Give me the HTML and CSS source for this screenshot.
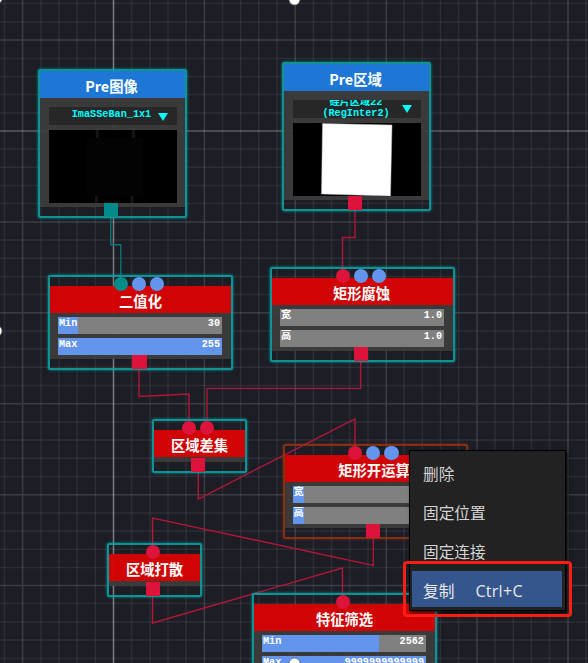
FILE: index.html
```html
<!DOCTYPE html>
<html lang="zh-CN">
<head>
<meta charset="utf-8">
<title>Node Graph</title>
<link rel="stylesheet" href="styles.css">
</head>
<body>
<main class="canvas">
  <svg class="layer" viewBox="0 0 588 663">
    <path class="minor" d="M4.5 0V663M41 0V663M59 0V663M77 0V663M95.4 0V663M131.6 0V663M150 0V663M168 0V663M186 0V663M222.5 0V663M240.6 0V663M258.8 0V663M277 0V663M313.4 0V663M331.5 0V663M349.6 0V663M368 0V663M404 0V663M422.4 0V663M440.5 0V663M458.6 0V663M495 0V663M513.2 0V663M531.4 0V663M549.5 0V663M586 0V663"/>
    <path class="minor" d="M0 3.6H588M0 22H588M0 58.4H588M0 76.5H588M0 94.6H588M0 113H588M0 149H588M0 167.3H588M0 185.5H588M0 203.6H588M0 240H588M0 258.2H588M0 276.4H588M0 294.5H588M0 331H588M0 349H588M0 367.3H588M0 385.5H588M0 422H588M0 440H588M0 458.3H588M0 476.5H588M0 513H588M0 531H588M0 549.3H588M0 567.4H588M0 603.6H588M0 622H588M0 640H588M0 658.4H588"/>
    <path class="major" d="M22.6 0V663M204.4 0V663M295.3 0V663M386.3 0V663M477 0V663M568 0V663M0 40H588M0 222H588M0 312.7H588M0 403.7H588M0 494.7H588M0 585.5H588"/>
    <path class="axis-x" d="M0 131H588"/>
    <path class="axis-y" d="M113.5 0V663"/>
  </svg>
  <svg class="layer" viewBox="0 0 588 663">
    <path class="wire teal" d="M110.7 217V244.7H120.8V284"/>
    <path class="wire" d="M355 210V237.5H342.5V276"/>
    <path class="wire" d="M139 369V396.5L189 394V429"/>
    <path class="wire" d="M360.6 361V388.4H207V429"/>
    <path class="wire" d="M198.3 472V499L355 419V453"/>
    <path class="wire" d="M373.3 538V565.5L152.6 518V552"/>
    <path class="wire" d="M152.6 595V623L342.5 568V602"/>
  </svg>

  <section class="node source n-image">
    <h2 class="title blue">Pre图像</h2>
    <div class="body">
      <div class="select"><span class="value">ImaSSeBan_1x1</span><i class="arrow"></i></div>
      <svg class="preview" viewBox="0 0 128 73">
        <rect width="128" height="73" fill="#000"/>
        <rect x="38" y="8" width="56" height="58" fill="#030303"/>
        <path d="M48.300 0V8M84.500 0V8M47.500 66V73M83 66V73" stroke="#141414" stroke-width="3"/>
      </svg>
    </div>
    <i class="out green"></i>
  </section>

  <section class="node source n-region">
    <h2 class="title blue">Pre区域</h2>
    <div class="body">
      <div class="select"><span class="value two">硅片区域22<br>(RegInter2)</span><i class="arrow"></i></div>
      <svg class="preview" viewBox="0 0 128 73">
        <rect width="128" height="73" fill="#000"/>
        <path d="M29.500 0.500L99 2L97.500 73L28.500 71Z" fill="#fff" stroke="#bbb" stroke-width="0.500"/>
      </svg>
    </div>
    <i class="out"></i>
  </section>

  <section class="node op n-binary">
    <div class="ins"><i class="green"></i><i class="param"></i><i class="param"></i></div>
    <h2 class="title">二值化</h2>
    <div class="body">
      <div class="slider"><i class="fill" style="width:12%"></i><span>Min</span><b>30</b></div>
      <div class="slider"><i class="fill" style="width:100%"></i><span>Max</span><b>255</b></div>
    </div>
    <i class="out"></i>
  </section>

  <section class="node op n-erode">
    <div class="ins"><i></i><i class="param"></i><i class="param"></i></div>
    <h2 class="title">矩形腐蚀</h2>
    <div class="body">
      <div class="slider"><span>宽</span><b>1.0</b></div>
      <div class="slider"><span>高</span><b>1.0</b></div>
    </div>
    <i class="out"></i>
  </section>

  <section class="node op small n-diff">
    <div class="ins"><i></i><i></i></div>
    <h2 class="title">区域差集</h2>
    <div class="body"></div>
    <i class="out"></i>
  </section>

  <section class="node op picked n-open">
    <div class="ins"><i></i><i class="param"></i><i class="param"></i></div>
    <h2 class="title">矩形开运算</h2>
    <div class="body">
      <div class="slider"><i class="fill" style="width:7.300%"></i><span>宽</span></div>
      <div class="slider"><i class="fill" style="width:7.300%"></i><span>高</span></div>
    </div>
    <i class="out"></i>
  </section>

  <section class="node op small n-split">
    <div class="ins"><i></i></div>
    <h2 class="title">区域打散</h2>
    <div class="body"></div>
    <i class="out"></i>
  </section>

  <section class="node op n-filter">
    <div class="ins"><i></i></div>
    <h2 class="title">特征筛选</h2>
    <div class="body">
      <div class="slider"><i class="fill" style="width:71.500%"></i><span>Min</span><b>2562</b></div>
      <div class="slider"><i class="fill" style="width:100%"></i><span>Max</span><b>9999999999999</b></div>
    </div>
  </section>

  <nav class="menu">
    <div class="item">删除</div>
    <div class="item">固定位置</div>
    <div class="item">固定连接</div>
    <div class="item active"><span>复制</span><kbd>Ctrl+C</kbd></div>
  </nav>
  <div class="highlight"></div>

  <svg class="layer" viewBox="0 0 588 663">
    <g fill="#fff" stroke="#555" stroke-width="0.700">
      <circle cx="294.500" cy="-0.500" r="5.500"/>
      <circle cx="-3" cy="-2" r="5.500"/>
      <circle cx="-3.500" cy="331" r="5.500"/>
      <circle cx="294.500" cy="663.500" r="5.500"/>
    </g>
  </svg>
</main>
</body>
</html>
```

FILE: styles.css
```css
* { box-sizing: border-box; }
body { margin: 0; background: #1d1d26; }
.canvas {
  position: relative;
  width: 588px;
  height: 663px;
  overflow: hidden;
  background: #1d1d26;
  font-family: "Noto Sans CJK SC", sans-serif;
}
.layer { position: absolute; left: 0; top: 0; width: 588px; height: 663px; }
.minor, .major, .axis-x, .axis-y { fill: none; stroke: #fff; stroke-width: 1.5; }
.minor { stroke-opacity: 0.07; }
.major { stroke-opacity: 0.14; }
.axis-x { stroke-opacity: 0.28; }
.axis-y { stroke-opacity: 0.42; }
.wire { fill: none; stroke: #b01638; stroke-width: 1.4; }
.wire.teal { stroke: #0a7472; }

.node {
  position: absolute;
  display: flex;
  flex-direction: column;
  border: 2px solid rgba(13, 157, 157, 0.92);
  border-radius: 2px;
  box-shadow: 0 0 3px rgba(0, 190, 190, 0.75);
}
.picked { border-color: rgba(150, 52, 18, 0.85); box-shadow: 0 0 3px rgba(190, 70, 20, 0.5); }
.source { width: 149px; height: 149px; }
.op { width: 185px; height: 95px; padding-top: 9px; }
.small { width: 95px; height: 54px; }
.n-image { left: 38px; top: 69px; }
.n-region { left: 282px; top: 62px; }
.n-binary { left: 48px; top: 275px; }
.n-erode { left: 270px; top: 267px; }
.n-diff { left: 152px; top: 419px; }
.n-open { left: 282.500px; top: 444px; }
.n-split { left: 107px; top: 543px; }
.n-filter { left: 252px; top: 593px; }

.title {
  flex: none;
  margin: 0;
  height: 27px;
  background: rgba(215, 3, 3, 0.96);
  color: #fff;
  font-size: 14.300px;
  font-weight: 700;
  line-height: 30px;
  text-align: center;
}
.n-erode .title, .n-open .title { padding-right: 2px; line-height: 29px; }
.blue { padding-right: 2px; background: rgba(31, 121, 216, 0.98); }
.body {
  flex: none;
  display: flex;
  flex-direction: column;
  gap: 4px;
  height: 46px;
  padding: 4px 9px 0 8px;
  background: rgba(60, 60, 60, 0.93);
}
.small .body { height: 5px; padding: 0; }
.source .body { height: 109px; padding: 9px 8px 0 9px; gap: 5px; }

.select {
  position: relative;
  flex: none;
  height: 18px;
  overflow: hidden;
  background: #272727;
  color: #0ff;
  font: 700 10.200px/15px "Liberation Mono", "Noto Sans CJK SC", monospace;
}
.value { display: block; width: 125px; text-align: center; }
.two { width: 126px; margin-top: -3px; line-height: 11px; }
.arrow {
  position: absolute;
  right: 9px;
  top: 6px;
  border: 5px solid transparent;
  border-top: 8px solid #0ff;
  border-bottom: 0;
}
.n-region .arrow { top: 5px; }
.preview { flex: none; display: block; width: 128px; height: 73px; }

.slider {
  position: relative;
  display: flex;
  justify-content: space-between;
  flex: none;
  height: 17px;
  padding: 0 2px 0 1px;
  overflow: hidden;
  background: #808080;
  color: #fff;
  font: 700 10.200px/13px "Liberation Mono", "Noto Sans CJK SC", monospace;
}
.slider span, .slider b { position: relative; }
.fill { position: absolute; left: 0; top: 0; height: 100%; background: #6495ed; }

.ins {
  position: absolute;
  left: 63.500px;
  top: 0;
  display: flex;
  gap: 4px;
}
.ins i { width: 14.200px; height: 14.200px; border-radius: 50%; background: #dc143c; }
.ins .param { background: #6495ed; }
.ins .green, .out.green { background: #008b8b; }
.n-diff .ins { left: 28px; }
.n-split .ins { left: 36.500px; }
.n-filter .ins { left: 81.500px; }
.out {
  position: absolute;
  left: 50%;
  bottom: -1px;
  width: 14px;
  height: 14px;
  margin-left: -9px;
  background: #dc143c;
}
.n-binary .out { width: 15px; }

.menu {
  position: absolute;
  left: 409px;
  top: 450px;
  width: 157px;
  height: 161px;
  padding: 3px 3px 0 2px;
  display: flex;
  flex-direction: column;
  gap: 3px;
  background: #222;
  border: 1.500px solid #000;
  box-shadow: 2px 2px 4px rgba(0, 0, 0, 0.7);
  color: #d4d4d4;
  font-size: 15.700px;
  line-height: 40px;
}
.item { height: 36px; padding-left: 11px; }
.active { display: flex; gap: 21px; background: #35568c; color: #e8e8e8; }
kbd { font: 16px/40px "Open Sans", "Noto Sans", sans-serif; letter-spacing: 0.300px; }
.highlight {
  position: absolute;
  left: 403px;
  top: 561px;
  width: 169px;
  height: 56px;
  border: 3px solid #ff1e14;
  border-radius: 4px;
}
```
